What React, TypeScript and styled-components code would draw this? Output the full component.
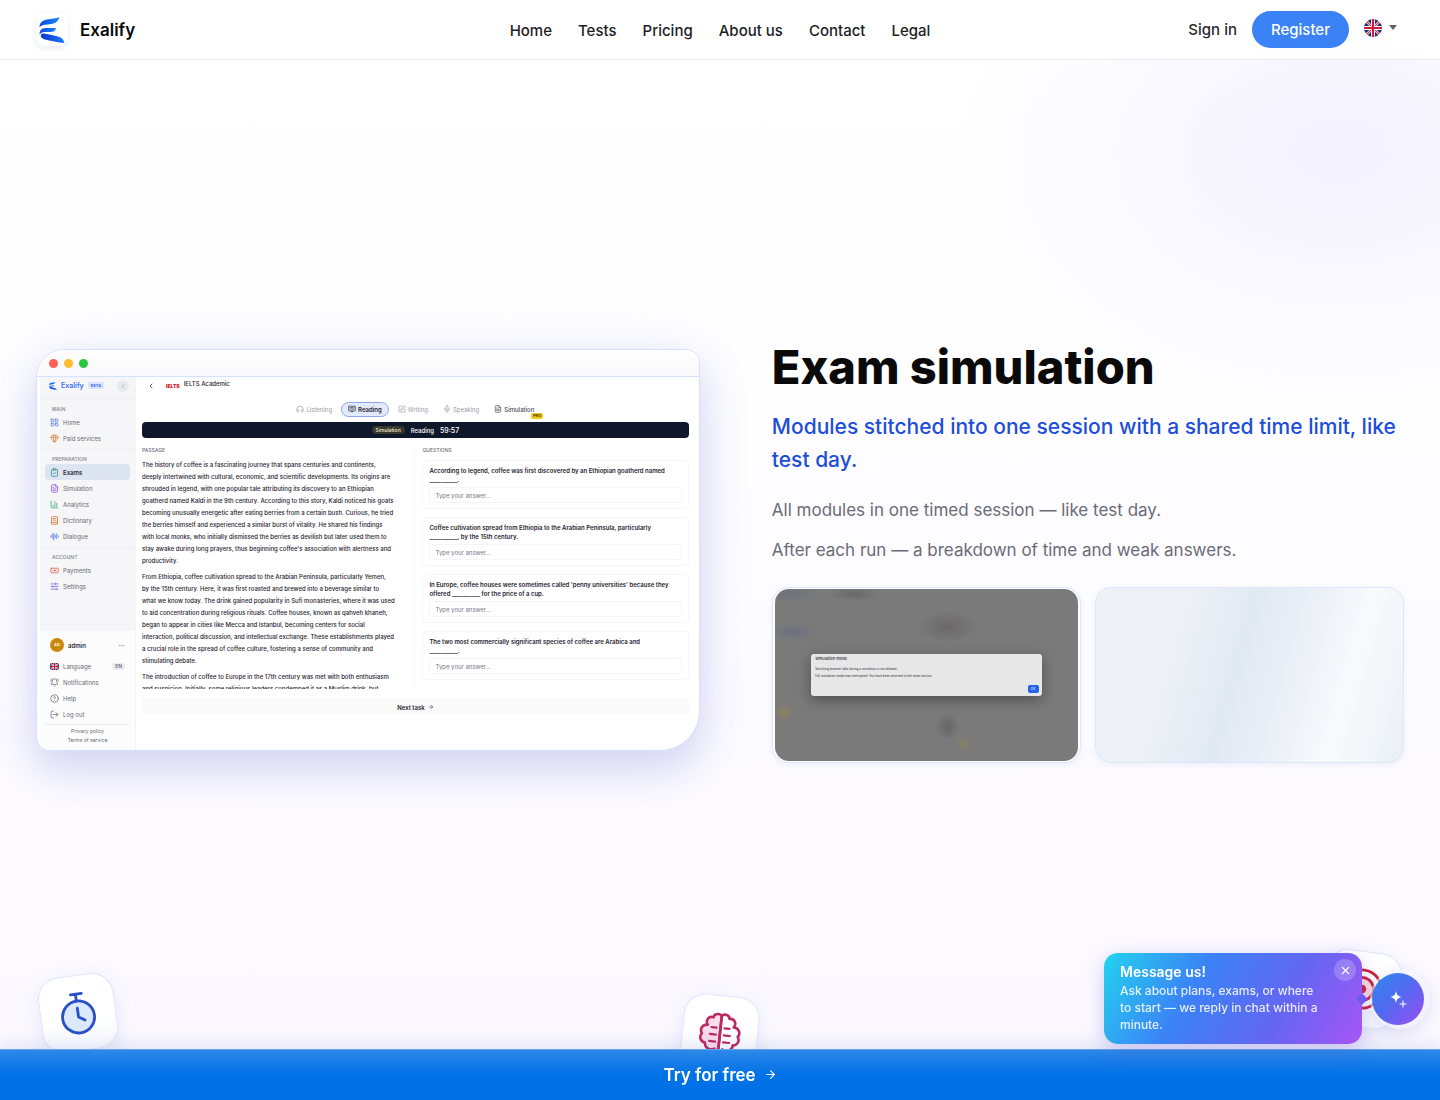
import React from "react";
import styled, { createGlobalStyle, css } from "styled-components";
import {
  LayoutGrid, Gem, ClipboardCheck, FileText, ChartColumn, BookText, AudioLines,
  Banknote, SlidersHorizontal, BellRing, CircleQuestionMark, LogOut, ChevronLeft,
  Headphones, BookOpenText, SquarePen, Mic, ArrowRight, X, Ellipsis,
} from "lucide-react";

const GlobalStyle = createGlobalStyle`
  * { box-sizing: border-box; }
  body {
    margin: 0;
    font-family: Inter, "Liberation Sans", sans-serif;
    color: #0a0a0b;
    background: #fbf9ff;
  }
  h1, h2, p, ul { margin: 0; padding: 0; }
  ul { list-style: none; }
  a { color: inherit; text-decoration: none; }
  button, input { font-family: inherit; }
  button { border: 0; background: none; padding: 0; color: inherit; cursor: pointer; }
`;

const Page = styled.div`
  min-height: 100vh;
  background:
    radial-gradient(ellipse 380px 250px at 93% 150px, rgba(240, 237, 254, 0.75), rgba(240, 237, 254, 0) 100%),
    linear-gradient(180deg, #ffffff 0, #fefeff 300px, #fbf9ff 1000px);
`;

/* ---------- Header ---------- */

const Header = styled.header`
  position: sticky;
  top: 0;
  z-index: 5;
  display: grid;
  grid-template-columns: 1fr auto 1fr;
  align-items: center;
  height: 60px;
  padding: 0 36px;
  background: rgba(255, 255, 255, 0.88);
  border-bottom: 1px solid #ebebf0;
`;

const Brand = styled.a`
  display: flex;
  align-items: center;
  gap: 12px;
  font-size: 17px;
  font-weight: 600;
  line-height: 28px;
`;

const LogoTile = styled.span`
  display: grid;
  place-items: center;
  width: 32px;
  height: 32px;
  border-radius: 8px;
  background: #fff;
  box-shadow: 0 2px 6px rgba(60, 80, 160, 0.12);
`;

const Nav = styled.nav`
  display: flex;
  gap: 26px;
  font-size: 15px;
  font-weight: 500;
  line-height: 24px;
  color: #1d1d1f;
  padding-top: 2px;
`;

const Actions = styled.div`
  display: flex;
  justify-content: flex-end;
  align-items: center;
  gap: 15px;
  font-size: 15px;
  font-weight: 500;
  color: #2a2a2e;
`;

const RegisterButton = styled.button`
  height: 37px;
  padding: 0 19px;
  border-radius: 19px;
  background: #3b82f6;
  color: #fff;
  font-size: 15px;
  font-weight: 500;
`;

const LanguageButton = styled.button`
  display: flex;
  align-items: center;
  gap: 6px;
  padding: 0 6px 4px 0;
`;

/* ---------- Hero ---------- */

const Hero = styled.section`
  display: grid;
  grid-template-columns: 1.05fr 1fr;
  align-items: center;
  gap: 72px;
  padding: 277px 36px 188px;
`;

const Copy = styled.div`
  display: flex;
  flex-direction: column;
`;

const Title = styled.h1`
  font-size: 47px;
  line-height: 60px;
  font-weight: 800;
`;

const Lead = styled.p`
  margin-top: 13px;
  font-size: 21px;
  line-height: 33px;
  font-weight: 500;
  color: #1d4ed8;
`;

const Notes = styled.div`
  display: grid;
  gap: 12px;
  margin-top: 20px;
  font-size: 17px;
  line-height: 28px;
  color: #6b6b76;
`;

const Thumbs = styled.div`
  display: grid;
  grid-template-columns: 1fr 1fr;
  gap: 14px;
  margin-top: 23px;
`;

const Thumb = styled.button`
  display: block;
  height: 176px;
  padding: 1px 2px;
  border: 1px solid #dbe7fd;
  border-radius: 16px;
  overflow: hidden;
  background: #fff;
  box-shadow: 0 2px 6px rgba(60, 100, 220, 0.08);
`;

const Skeleton = styled(Thumb)`
  background: linear-gradient(106deg, #eef2f6 0%, #edf1f6 26%, #e1e9f2 46%, #ebf0f7 62%, #f8fafc 78%, #f3f7fa 88%, #e9eff5 100%);
`;

const Dimmed = styled.span`
  display: grid;
  place-items: center;
  height: 100%;
  border-radius: 14px;
  background:
    radial-gradient(ellipse 22px 8px at 6% 25%, rgba(75, 90, 150, 0.35), transparent),
    radial-gradient(ellipse 30px 8px at 4% 3%, rgba(85, 90, 130, 0.3), transparent),
    radial-gradient(ellipse 24px 7px at 26% 3%, rgba(85, 85, 85, 0.5), transparent),
    radial-gradient(ellipse 30px 16px at 57% 22%, rgba(100, 96, 98, 0.7), transparent),
    radial-gradient(ellipse 12px 14px at 57% 80%, rgba(92, 92, 98, 0.7), transparent),
    radial-gradient(ellipse 9px 8px at 3% 72%, rgba(165, 140, 50, 0.5), transparent),
    radial-gradient(ellipse 9px 8px at 62% 90%, rgba(150, 135, 70, 0.4), transparent),
    #7a7a7a;
`;

const Dialog = styled.span`
  display: flex;
  flex-direction: column;
  width: 76%;
  height: 42px;
  padding: 3px 3px 3px 4px;
  border-radius: 3px;
  background: #e7e7e7;
  box-shadow: 0 4px 14px rgba(0, 0, 0, 0.35);
  color: #2b2b30;
  text-align: left;
  font-size: 3px;
  line-height: 4px;
`;

const DialogTitle = styled.strong`
  font-size: 4px;
  font-weight: 500;
  margin-bottom: 6px;
`;

const DialogLine = styled.span`
  margin-bottom: 3px;
`;

const DialogOk = styled.span`
  align-self: flex-end;
  margin-top: auto;
  width: 11px;
  border-radius: 2px;
  background: #2563eb;
  color: #fff;
  text-align: center;
  line-height: 8px;
`;

/* ---------- Product window ---------- */

const Window = styled.div`
  display: flex;
  flex-direction: column;
  height: 402px;
  border: 1px solid #d5e2fb;
  border-radius: 28px 14px 40px 14px;
  overflow: hidden;
  background: #fff;
  box-shadow: 0 18px 40px rgba(70, 90, 200, 0.2), 0 6px 60px rgba(110, 90, 230, 0.08);
`;

const TitleBar = styled.div`
  display: flex;
  flex: none;
  align-items: center;
  gap: 6px;
  height: 27px;
  padding-left: 12px;
  border-bottom: 1px solid #d5e2fb;
  background: linear-gradient(180deg, #fff, #f8f8fa);
`;

const Dot = styled.span<{ $color: string }>`
  width: 9px;
  height: 9px;
  border-radius: 50%;
  background: ${(p) => p.$color};
`;

const AppBody = styled.div`
  display: flex;
  flex: 1;
  min-height: 0;
  font-size: 6px;
  line-height: 9px;
`;

const Sidebar = styled.aside`
  display: flex;
  flex-direction: column;
  flex: none;
  width: 96px;
  margin-left: 3px;
  background: #f6f6f8;
  border-right: 1px solid #f3f3f6;
  color: #686872;
`;

const SideHead = styled.div`
  display: flex;
  align-items: center;
  gap: 4px;
  height: 22px;
  padding: 0 6px 4px 9px;
  margin-bottom: 5px;
  border-bottom: 1px solid #eeeef1;
  font-size: 7px;
  font-weight: 600;
  color: #3b73ee;
  svg { flex: none; }
`;

const Beta = styled.span`
  padding: 0 3px;
  border-radius: 2px;
  background: #d9e4fb;
  font-size: 4px;
  line-height: 7px;
  font-weight: 700;
`;

const Collapse = styled.button`
  display: grid;
  place-items: center;
  width: 12px;
  height: 12px;
  margin-left: auto;
  border-radius: 50%;
  background: #e8e8f0;
  color: #7a7a88;
`;

const SideGroup = styled.div`
  padding: 0 5px;
  & + & {
    margin-top: 3px;
    padding-top: 4px;
    border-top: 1px solid #f0f0f3;
  }
`;

const GroupLabel = styled.p`
  padding-left: 7px;
  font-size: 5px;
  line-height: 10px;
  font-weight: 600;
  color: #8f8f98;
`;

const SideLink = styled.a<{ $active?: boolean }>`
  display: flex;
  align-items: center;
  gap: 4px;
  height: 16px;
  padding: 0 5px;
  border-radius: 4px;
  ${(p) => p.$active && css`
    background: #dde4f2;
    color: #1f2937;
    font-weight: 600;
  `}
  svg { flex: none; }
`;

const SideFoot = styled.div`
  display: flex;
  flex-direction: column;
  margin-top: auto;
  padding: 5px;
  background: #fcfcfd;
`;

const Account = styled.div`
  display: flex;
  align-items: center;
  gap: 4px;
  height: 18px;
  margin-bottom: 4px;
  padding: 0 5px;
  font-weight: 600;
  color: #2f2f36;
  svg { margin-left: auto; color: #9a9aa4; }
`;

const Avatar = styled.span`
  width: 14px;
  height: 14px;
  border-radius: 50%;
  background: #c98a0c;
  color: #fff;
  font-size: 4px;
  line-height: 14px;
  text-align: center;
`;

const LangCode = styled.span`
  margin-left: auto;
  padding: 0 3px;
  border-radius: 2px;
  background: #ececf1;
  font-size: 5px;
  line-height: 7px;
  font-weight: 600;
`;

const LegalLinks = styled.div`
  display: grid;
  margin-top: 2px;
  padding-top: 2px;
  border-top: 1px solid #eeeef1;
  text-align: center;
  font-size: 5px;
`;

const Workspace = styled.div`
  display: flex;
  flex-direction: column;
  flex: 1;
  min-width: 0;
  padding: 0 10px 35px 6px;
  color: #1f2430;
`;

const ExamHead = styled.div`
  display: flex;
  align-items: center;
  height: 18px;
  padding-left: 5px;
  font-weight: 500;
`;

const IeltsMark = styled.span`
  margin: 0 4px 0 11px;
  color: #d4152e;
  font-size: 5px;
  font-weight: 900;
`;

const ExamName = styled.span`
  padding-bottom: 6px;
`;

const Tabs = styled.div`
  display: flex;
  justify-content: center;
  align-items: center;
  gap: 15px;
  height: 16px;
  margin: 6px 0 5px;
`;

const Tab = styled.button<{ $tone?: "active" | "ready" }>`
  position: relative;
  display: flex;
  align-items: center;
  gap: 2px;
  height: 15px;
  font-size: 6px;
  color: #9a9ca6;
  ${(p) => p.$tone === "ready" && css`color: #4b4d58; font-weight: 500;`}
  ${(p) => p.$tone === "active" && css`
    margin: 0 -6px;
    padding: 0 6px;
    border: 1px solid #8ea4ee;
    border-radius: 8px;
    background: #e3eafc;
    color: #1f2430;
    font-weight: 600;
  `}
`;

const Pro = styled.span`
  position: absolute;
  right: -9px;
  bottom: -2px;
  padding: 0 2px;
  border-radius: 2px;
  background: #f2cc1c;
  color: #574500;
  font-size: 4px;
  line-height: 6px;
  font-weight: 700;
`;

const TimerBar = styled.div`
  display: flex;
  justify-content: center;
  align-items: center;
  gap: 6px;
  flex: none;
  height: 16px;
  border-radius: 4px;
  background: #0f172a;
  color: #fff;
  font-weight: 500;
`;

const ModeChip = styled.span`
  padding: 0 4px;
  border-radius: 4px;
  background: #37372e;
  font-size: 5px;
  line-height: 8px;
  color: #f3eecb;
`;

const Clock = styled.span`
  font-size: 7px;
`;

const Columns = styled.div`
  display: grid;
  grid-template-columns: 273fr 266fr;
  gap: 7px;
  height: 251px;
  padding-top: 8px;
`;

const Column = styled.div`
  display: flex;
  flex-direction: column;
  min-height: 0;
  overflow: hidden;
`;

const PassageColumn = styled(Column)`
  border-right: 1px solid #f8f8fa;
`;

const ColumnLabel = styled.h2`
  margin-bottom: 4px;
  font-size: 5px;
  line-height: 9px;
  font-weight: 500;
  color: #6d6f7a;
`;

const Passage = styled.div`
  display: grid;
  gap: 4px;
  line-height: 12px;
  font-weight: 500;
  white-space: pre;
  overflow: hidden;
`;

const Questions = styled.div`
  display: grid;
  gap: 8px;
  padding-top: 1px;
`;

const Question = styled.label`
  display: grid;
  gap: 3px;
  padding: 5px 6px;
  border: 1px solid #f6f6f8;
  border-radius: 4px;
  font-weight: 600;
  white-space: pre;
`;

const Answer = styled.input`
  width: 100%;
  height: 16px;
  padding: 0 5px;
  border: 1px solid #f4f5f7;
  border-radius: 3px;
  background: #fff;
  font-size: 6px;
  &::placeholder { color: #76798a; opacity: 1; }
`;

const NextTask = styled.button`
  display: flex;
  justify-content: center;
  align-items: center;
  gap: 3px;
  flex: none;
  height: 16px;
  margin-top: 10px;
  background: #fafafb;
  font-size: 6px;
  font-weight: 600;
`;

/* ---------- Floating tiles ---------- */

const Tiles = styled.section`
  display: flex;
  justify-content: space-between;
  align-items: flex-start;
  padding: 0 40px;
`;

const Tile = styled.div<{ $tilt: number; $drop: number }>`
  display: grid;
  place-items: center;
  width: 76px;
  height: 76px;
  margin-top: ${(p) => p.$drop}px;
  border: 1px solid #dde8fc;
  border-radius: 22px;
  background: linear-gradient(180deg, #fff 55%, #f8faff);
  box-shadow: 0 6px 18px rgba(80, 90, 200, 0.12);
  transform: rotate(${(p) => p.$tilt}deg);
`;

/* ---------- Fixed layers ---------- */

const TrialBar = styled.a`
  position: fixed;
  left: 0;
  right: 0;
  bottom: 0;
  display: flex;
  justify-content: center;
  align-items: center;
  gap: 8px;
  height: 51px;
  padding-bottom: 1px;
  border-top: 1px solid #64a4ec;
  background: linear-gradient(180deg, #2f89e6 0, #1a7ee8 10px, #0071e6 26px);
  box-shadow: 0 -4px 18px rgba(40, 60, 160, 0.12);
  color: #fff;
  font-size: 17px;
  font-weight: 600;
`;

const Chat = styled.div`
  position: fixed;
  right: 16px;
  bottom: 56px;
  z-index: 6;
  display: flex;
  align-items: center;
  gap: 10px;
`;

const Bubble = styled.div`
  position: relative;
  width: 258px;
  padding: 9px 36px 11px 16px;
  border-radius: 14px;
  background: linear-gradient(120deg, #22d3ee 0%, #3b82f6 35%, #6366f1 68%, #a855f7 100%);
  box-shadow: 0 6px 20px rgba(90, 80, 220, 0.28);
  color: rgba(255, 255, 255, 0.86);
  font-size: 12px;
  font-weight: 500;
  line-height: 17px;
  &::after {
    content: "";
    position: absolute;
    right: -4px;
    top: 42px;
    width: 8px;
    height: 8px;
    background: #6a5cf0;
    transform: rotate(45deg);
  }
`;

const BubbleTitle = styled.p`
  font-size: 14px;
  font-weight: 600;
  line-height: 20px;
  color: #fff;
`;

const CloseButton = styled.button`
  position: absolute;
  top: 6px;
  right: 6px;
  display: grid;
  place-items: center;
  width: 22px;
  height: 22px;
  border-radius: 50%;
  background: rgba(255, 255, 255, 0.2);
  color: #fff;
`;

const ChatButton = styled.button`
  display: grid;
  place-items: center;
  width: 52px;
  height: 52px;
  border-radius: 50%;
  background: linear-gradient(135deg, #2f8cf0 0%, #4f6bf0 45%, #9a4df2 100%);
  box-shadow: 2px 0 0 4px rgba(250, 250, 255, 0.6), 2px 4px 14px 4px rgba(90, 80, 200, 0.16);
`;

/* ---------- Drawings ---------- */

function Logo({ size }: { size: number }) {
  return (
    <svg width={size} height={size} viewBox="0 0 26 26" aria-hidden="true">
      <defs>
        <linearGradient id="wing" x1="0" y1="0" x2="1" y2="0">
          <stop offset="0" stopColor="#0b49e0" />
          <stop offset="1" stopColor="#1b84ff" />
        </linearGradient>
        <linearGradient id="tail" x1="0" y1="0" x2="1" y2="0">
          <stop offset="0" stopColor="#0738c8" />
          <stop offset="1" stopColor="#1b78ff" />
        </linearGradient>
      </defs>
      <path fill="url(#wing)" d="M0.500 10C0.500 5.500 3.500 3.200 8 2.400C13 1.600 17 1.500 20.500 0C19 4.500 16.500 6.300 12 7C7.500 7.600 3.500 7.600 0.500 10Z" />
      <path fill="url(#wing)" d="M0.500 17.500C0.500 13.500 2.500 11.200 6.500 11H17C16.500 14 14.500 15 11.500 15H6C3.500 15 2 15.800 0.500 17.500Z" />
      <path fill="url(#tail)" d="M4.500 16.600C9 17.400 14 18.300 18 19.200C22.500 20.300 24.800 22.500 25.500 26C19 25.500 12 23.900 5 22.200C1 21 0.800 16.200 4.500 16.600Z" />
    </svg>
  );
}

function RoundFlag() {
  return (
    <svg width="18" height="18" viewBox="0 0 18 18" aria-hidden="true">
      <defs><clipPath id="disc"><circle cx="9" cy="9" r="9" /></clipPath></defs>
      <g clipPath="url(#disc)"><UnionJack /></g>
    </svg>
  );
}

function UnionJack() {
  return (
    <>
      <rect width="18" height="18" fill="#1c2c6b" />
      <path d="M0 0L18 18M18 0L0 18" stroke="#fff" strokeWidth="2.600" />
      <path d="M0 0L18 18M18 0L0 18" stroke="#cf1b3b" strokeWidth="1.100" />
      <path d="M9 0V18M0 9H18" stroke="#fff" strokeWidth="4" />
      <path d="M9 0V18M0 9H18" stroke="#cf1b3b" strokeWidth="2.200" />
    </>
  );
}

function Stopwatch() {
  return (
    <svg width="46" height="46" viewBox="0 0 44 46" fill="none" stroke="#2a50c8" strokeWidth="2.800" strokeLinecap="round" strokeLinejoin="round">
      <circle cx="22" cy="27" r="16" fill="#dbe9fd" />
      <path d="M22 11V5M17 4H28M22 18V27L28 31" />
    </svg>
  );
}

function BrainIcon() {
  return (
    <svg width="44" height="44" viewBox="0 0 44 44" fill="none" stroke="#bd2a62" strokeWidth="2.600" strokeLinecap="round" strokeLinejoin="round">
      <path fill="#fbdcec" d="M22 5C20 2 14 3 14 7C9 6 6 11 9 15C4 15 1 20 4 24C1 28 4 33 8 33C8 38 14 41 18 38C20 41 22 39 22 37Z" />
      <path d="M22 5C24 2 30 3 30 7C35 6 38 11 35 15C40 15 43 20 40 24C43 28 40 33 36 33C36 38 30 41 26 38C24 41 22 39 22 37Z" />
      <path strokeWidth="2.200" d="M13 17H18M12 24H18M12 31H18M26 17H31M26 24H32M26 31H32" />
    </svg>
  );
}

function TargetIcon() {
  return (
    <svg width="44" height="44" viewBox="0 0 46 46" fill="none" stroke="#cf2436" strokeWidth="3">
      <circle cx="23" cy="23" r="20" />
      <circle cx="23" cy="23" r="12" fill="#fbdde1" />
      <circle cx="23" cy="23" r="3" fill="#cf2436" />
    </svg>
  );
}

function Sparkles() {
  return (
    <svg width="18" height="18" viewBox="0 0 18 18" fill="#fff" aria-hidden="true">
      <path d="M7 1C7.800 5 9 6.200 13 7C9 7.800 7.800 9 7 13C6.200 9 5 7.800 1 7C5 6.200 6.200 5 7 1Z" />
      <path d="M14 11V17M11 14H17" stroke="#fff" strokeWidth="1.100" strokeLinecap="round" />
    </svg>
  );
}

/* ---------- Content ---------- */

const navItems = ["Home", "Tests", "Pricing", "About us", "Contact", "Legal"];

const sideGroups = [
  { label: "MAIN", items: [
    { name: "Home", Icon: LayoutGrid, color: "#5b73e8" },
    { name: "Paid services", Icon: Gem, color: "#d98032" },
  ] },
  { label: "PREPARATION", items: [
    { name: "Exams", Icon: ClipboardCheck, color: "#1f8f8a" },
    { name: "Simulation", Icon: FileText, color: "#9350e8" },
    { name: "Analytics", Icon: ChartColumn, color: "#35a36c" },
    { name: "Dictionary", Icon: BookText, color: "#d9672b" },
    { name: "Dialogue", Icon: AudioLines, color: "#3b6fe8" },
  ] },
  { label: "ACCOUNT", items: [
    { name: "Payments", Icon: Banknote, color: "#e0583f" },
    { name: "Settings", Icon: SlidersHorizontal, color: "#6a5ae0" },
  ] },
];

const passage = [
  `The history of coffee is a fascinating journey that spans centuries and continents,
deeply intertwined with cultural, economic, and scientific developments. Its origins are
shrouded in legend, with one popular tale attributing its discovery to an Ethiopian
goatherd named Kaldi in the 9th century. According to this story, Kaldi noticed his goats
becoming unusually energetic after eating berries from a certain bush. Curious, he tried
the berries himself and experienced a similar burst of vitality. He shared his findings
with local monks, who initially dismissed the berries as devilish but later used them to
stay awake during long prayers, thus beginning coffee's association with alertness and
productivity.`,
  `From Ethiopia, coffee cultivation spread to the Arabian Peninsula, particularly Yemen,
by the 15th century. Here, it was first roasted and brewed into a beverage similar to
what we know today. The drink gained popularity in Sufi monasteries, where it was used
to aid concentration during religious rituals. Coffee houses, known as qahveh khaneh,
began to appear in cities like Mecca and Istanbul, becoming centers for social
interaction, political discussion, and intellectual exchange. These establishments played
a crucial role in the spread of coffee culture, fostering a sense of community and
stimulating debate.`,
  `The introduction of coffee to Europe in the 17th century was met with both enthusiasm
and suspicion. Initially, some religious leaders condemned it as a Muslim drink, but`,
];

const questions = [
  "According to legend, coffee was first discovered by an Ethiopian goatherd named\n__________.",
  "Coffee cultivation spread from Ethiopia to the Arabian Peninsula, particularly\n__________, by the 15th century.",
  "In Europe, coffee houses were sometimes called 'penny universities' because they\noffered __________ for the price of a cup.",
  "The two most commercially significant species of coffee are Arabica and\n__________.",
];

function ProductWindow() {
  return (
    <Window>
      <TitleBar>
        <Dot $color="#ff5f57" />
        <Dot $color="#febc2e" />
        <Dot $color="#28c840" />
      </TitleBar>
      <AppBody>
        <Sidebar>
          <SideHead>
            <Logo size={8} />
            Exalify
            <Beta>BETA</Beta>
            <Collapse aria-label="Collapse menu"><ChevronLeft size={6} /></Collapse>
          </SideHead>
          {sideGroups.map((group) => (
            <SideGroup key={group.label}>
              <GroupLabel>{group.label}</GroupLabel>
              {group.items.map(({ name, Icon, color }) => (
                <SideLink key={name} href="#" $active={name === "Exams"}>
                  <Icon size={9} color={color} />
                  {name}
                </SideLink>
              ))}
            </SideGroup>
          ))}
          <SideFoot>
            <Account><Avatar>AD</Avatar>admin<Ellipsis size={7} /></Account>
            <SideLink href="#">
              <svg width="9" height="7" viewBox="0 0 18 18" preserveAspectRatio="none"><UnionJack /></svg>
              Language
              <LangCode>EN</LangCode>
            </SideLink>
            <SideLink href="#"><BellRing size={9} />Notifications</SideLink>
            <SideLink href="#"><CircleQuestionMark size={9} />Help</SideLink>
            <SideLink href="#"><LogOut size={9} />Log out</SideLink>
            <LegalLinks>
              <a href="#">Privacy policy</a>
              <a href="#">Terms of service</a>
            </LegalLinks>
          </SideFoot>
        </Sidebar>
        <Workspace>
          <ExamHead>
            <ChevronLeft size={8} />
            <IeltsMark>IELTS</IeltsMark>
            <ExamName>IELTS Academic</ExamName>
          </ExamHead>
          <Tabs>
            <Tab><Headphones size={8} />Listening</Tab>
            <Tab $tone="active"><BookOpenText size={8} />Reading</Tab>
            <Tab><SquarePen size={8} />Writing</Tab>
            <Tab><Mic size={8} />Speaking</Tab>
            <Tab $tone="ready"><FileText size={8} />Simulation<Pro>PRO</Pro></Tab>
          </Tabs>
          <TimerBar>
            <ModeChip>Simulation</ModeChip>
            Reading
            <Clock>59:57</Clock>
          </TimerBar>
          <Columns>
            <PassageColumn>
              <ColumnLabel>PASSAGE</ColumnLabel>
              <Passage>{passage.map((text) => <p key={text}>{text}</p>)}</Passage>
            </PassageColumn>
            <Column>
              <ColumnLabel>QUESTIONS</ColumnLabel>
              <Questions>
                {questions.map((text) => (
                  <Question key={text}>
                    {text}
                    <Answer placeholder="Type your answer..." />
                  </Question>
                ))}
              </Questions>
            </Column>
          </Columns>
          <NextTask>Next task <ArrowRight size={6} /></NextTask>
        </Workspace>
      </AppBody>
    </Window>
  );
}

export default function App() {
  return (
    <Page>
      <GlobalStyle />
      <Header>
        <Brand href="#"><LogoTile><Logo size={26} /></LogoTile>Exalify</Brand>
        <Nav>{navItems.map((item) => <a key={item} href="#">{item}</a>)}</Nav>
        <Actions>
          <a href="#">Sign in</a>
          <RegisterButton>Register</RegisterButton>
          <LanguageButton aria-label="Language">
            <RoundFlag />
            <svg width="10" height="6" viewBox="0 0 10 6"><path d="M1 0H9L5 5Z" fill="#606066" /></svg>
          </LanguageButton>
        </Actions>
      </Header>
      <main>
        <Hero>
          <ProductWindow />
          <Copy>
            <Title>Exam simulation</Title>
            <Lead>Modules stitched into one session with a shared time limit, like test day.</Lead>
            <Notes>
              <p>All modules in one timed session — like test day.</p>
              <p>After each run — a breakdown of time and weak answers.</p>
            </Notes>
            <Thumbs>
              <Thumb aria-label="Simulation mode notice">
                <Dimmed>
                  <Dialog>
                    <DialogTitle>Simulation mode</DialogTitle>
                    <DialogLine>Switching browser tabs during a simulation is not allowed.</DialogLine>
                    <DialogLine>Full simulation mode was interrupted. You have been returned to the exam section.</DialogLine>
                    <DialogOk>OK</DialogOk>
                  </Dialog>
                </Dimmed>
              </Thumb>
              <Skeleton aria-label="Preview loading" />
            </Thumbs>
          </Copy>
        </Hero>
        <Tiles>
          <Tile $tilt={-8} $drop={24}><Stopwatch /></Tile>
          <Tile $tilt={6} $drop={44}><BrainIcon /></Tile>
          <Tile $tilt={8} $drop={0}><TargetIcon /></Tile>
        </Tiles>
      </main>
      <TrialBar href="#">Try for free <ArrowRight size={13} /></TrialBar>
      <Chat>
        <Bubble>
          <BubbleTitle>Message us!</BubbleTitle>
          <p>Ask about plans, exams, or where to start — we reply in chat within a minute.</p>
          <CloseButton aria-label="Close"><X size={13} /></CloseButton>
        </Bubble>
        <ChatButton aria-label="Open chat"><Sparkles /></ChatButton>
      </Chat>
    </Page>
  );
}
